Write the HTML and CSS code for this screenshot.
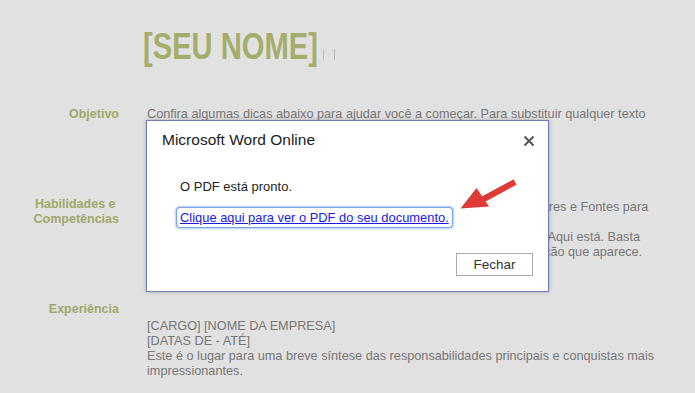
FILE: index.html
```html
<!DOCTYPE html>
<html lang="pt">
<head>
<meta charset="utf-8">
<title>Currículo</title>
<link rel="stylesheet" href="styles.css">
</head>
<body>
<div class="page">
  <header class="head">
    <h1 class="name">[SEU NOME]</h1><span class="caret"></span><span class="caret caret2"></span>
  </header>

  <section class="sec sec-obj">
    <h2 class="label">Objetivo</h2>
    <p class="text">Confira algumas dicas abaixo para ajudar você a começar. Para substituir qualquer texto<br>de dica por seu próprio texto, basta clicar nele e começar a digitar.</p>
  </section>

  <section class="sec sec-hab">
    <h2 class="label">Habilidades e&nbsp;<br>Competências</h2>
    <p class="text text-hab">Na guia Design da faixa de opções, confira já as galerias de Temas, Cores e Fontes para<br>obter uma aparência personalizada com apenas um clique.<br>Precisa de mais um item de experiência ou formação? Você entendeu. Aqui está. Basta<br>clicar já no texto do exemplo e, logo em seguida, clique no sinal de adição que aparece.</p>
  </section>

  <section class="sec sec-exp">
    <h2 class="label">Experiência</h2>
    <p class="text text-exp">[CARGO] [NOME DA EMPRESA]<br>[DATAS DE - ATÉ]<br>Este é o lugar para uma breve síntese das responsabilidades principais e conquistas mais<br>impressionantes.</p>
  </section>
</div>

<div class="dialog">
  <div class="dlg-head">
    <span class="dlg-title">Microsoft Word Online</span>
    <svg class="dlg-close" width="12" height="12" viewBox="0 0 12 12"><path d="M1.5 1.5 L10.5 10.5 M10.5 1.5 L1.5 10.5" stroke="#555" stroke-width="2" fill="none"/></svg>
  </div>
  <div class="dlg-body">
    <p class="dlg-msg">O PDF está pronto.</p>
    <a class="dlg-link" href="#">Clique aqui para ver o PDF do seu documento.</a>
  </div>
  <div class="dlg-foot">
    <button class="dlg-btn">Fechar</button>
  </div>
</div>

<svg class="arrow" width="695" height="393" viewBox="0 0 695 393">
  <path d="M515 182 L480 201" stroke="#df3a36" stroke-width="6" stroke-linecap="butt" fill="none"/>
  <polygon points="460.5,208.5 476.5,188 489,206.5" fill="#df3a36"/>
</svg>
</body>
</html>
```

FILE: styles.css
```css
html, body {
  margin: 0;
  padding: 0;
}
body {
  background: #e1e1e1;
  width: 695px;
  height: 393px;
  overflow: hidden;
  position: relative;
  font-family: "Liberation Sans", Arial, sans-serif;
}
.page {
  padding-top: 26px;
}
.head {
  display: flex;
  align-items: flex-end;
  padding-left: 143px;
  height: 42px;
}
.name {
  margin: 0 -41px 0 0;
  font-family: "Liberation Sans", Arial, sans-serif;
  font-weight: bold;
  font-size: 36px;
  line-height: 42px;
  color: #a4ad6b;
  transform: scaleX(0.81);
  transform-origin: left center;
}
.caret {
  display: inline-block;
  width: 1px;
  height: 11px;
  background: #b9b9b9;
  margin-left: 5px;
  margin-bottom: 8px;
}
.caret2 {
  margin-left: 10px;
}
.sec {
  display: grid;
  grid-template-columns: 119px 520px;
  column-gap: 28px;
}
.sec-obj { margin-top: 39px; }
.sec-hab { margin-top: 60px; }
.sec-exp { margin-top: 42px; }
.label {
  margin: 0;
  text-align: right;
  font-size: 12.5px;
  font-weight: bold;
  line-height: 15px;
  color: #a0a86c;
}
.text {
  margin: 0;
  font-size: 12.7px;
  line-height: 15px;
  color: #767676;
}
.text-hab {
  padding-top: 3px;
}
.text-exp {
  padding-top: 17px;
}

.dialog {
  position: absolute;
  left: 146px;
  top: 120px;
  width: 401px;
  height: 170px;
  background: #fff;
  border: 1px solid #6c7cb3;
  box-shadow: 0 0 4px rgba(0, 0, 0, 0.25);
  display: flex;
  flex-direction: column;
}
.dlg-head {
  display: flex;
  justify-content: space-between;
  align-items: center;
  padding: 9px 13px 0 15px;
  height: 20px;
}
.dlg-title {
  font-size: 15.5px;
  line-height: 20px;
  color: #222;
}
.dlg-close {
  display: block;
  margin-top: 1px;
}
.dlg-body {
  padding-left: 33px;
  padding-top: 29px;
}
.dlg-msg {
  margin: 0 0 13px;
  font-size: 13px;
  line-height: 16px;
  color: #222;
}
.dlg-link {
  display: inline-block;
  margin-left: -3px;
  padding: 2px 3px 1px;
  font-size: 12.9px;
  line-height: 16px;
  color: #1a1ae0;
  text-decoration: underline;
  border-radius: 3px;
  box-shadow: 0 0 0 1px #78a3ec, 0 0 2px 2px #b4cff7;
}
.dlg-foot {
  display: flex;
  justify-content: flex-end;
  padding-right: 15px;
  margin-top: 26px;
}
.dlg-btn {
  width: 77px;
  height: 23px;
  margin: 0;
  padding: 0;
  background: #fff;
  border: 1px solid #a9a9a9;
  border-radius: 0;
  font-family: "Liberation Sans", Arial, sans-serif;
  font-size: 13.5px;
  color: #333;
}
.arrow {
  position: absolute;
  left: 0;
  top: 0;
  pointer-events: none;
}
```
